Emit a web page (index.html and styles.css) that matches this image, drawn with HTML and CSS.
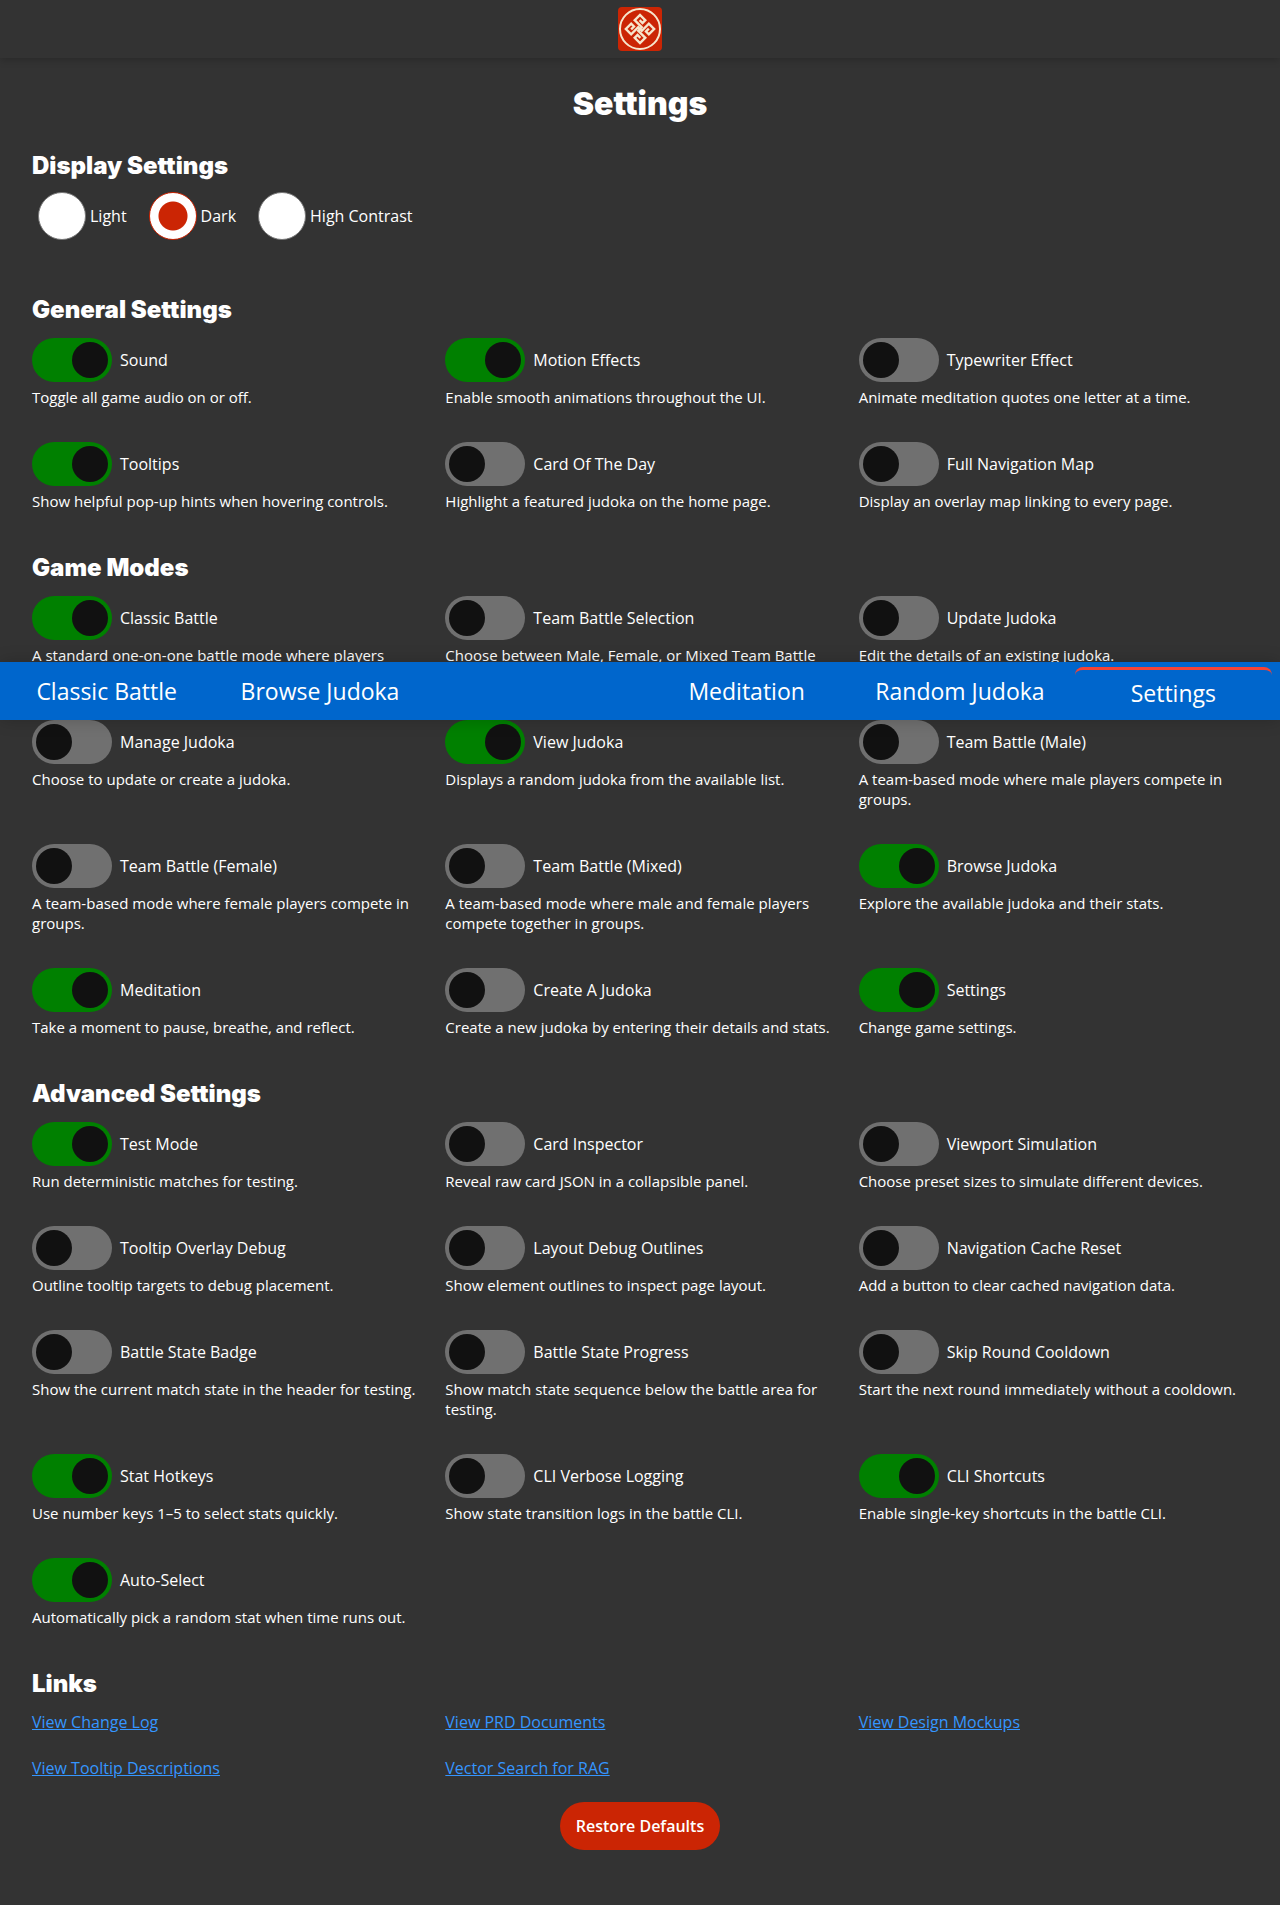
FILE: index.html
```html
<!DOCTYPE html>
<html lang="en">
<head>
<meta charset="utf-8">
<meta name="viewport" content="width=device-width, initial-scale=1">
<title>Settings</title>
<link rel="stylesheet" href="styles.css">
</head>
<body>
<header class="header">
  <a class="logo" href="#" aria-label="Home">
    <svg viewBox="0 0 44 44" width="44" height="44" aria-hidden="true">
      <rect width="44" height="44" rx="4" fill="#cb2504"/>
      <g fill="none" stroke="#f6e6cc" stroke-width="2.4">
        <circle cx="22" cy="22" r="20" stroke-width="2"/>
        <g transform="translate(22 22) rotate(45)">
          <path id="arm" d="M0 0V-2.5H-10V-10H-2.5V-6H-6.5"/>
          <use href="#arm" transform="rotate(90)"/>
          <use href="#arm" transform="rotate(180)"/>
          <use href="#arm" transform="rotate(270)"/>
        </g>
      </g>
    </svg>
  </a>
</header>

<main class="page">
  <h1 class="title">Settings</h1>

  <section class="section">
    <h2 class="heading">Display Settings</h2>
    <div class="themes" role="radiogroup" aria-label="Theme">
      <label class="theme"><input class="radio" type="radio" name="theme">Light</label>
      <label class="theme"><input class="radio" type="radio" name="theme" checked>Dark</label>
      <label class="theme"><input class="radio" type="radio" name="theme">High Contrast</label>
    </div>
  </section>

  <section class="section">
    <h2 class="heading">General Settings</h2>
    <div class="grid">
      <div class="item"><label class="toggle"><input class="switch" type="checkbox" checked>Sound</label><p class="desc">Toggle all game audio on or off.</p></div>
      <div class="item"><label class="toggle"><input class="switch" type="checkbox" checked>Motion Effects</label><p class="desc">Enable smooth animations throughout the UI.</p></div>
      <div class="item"><label class="toggle"><input class="switch" type="checkbox">Typewriter Effect</label><p class="desc">Animate meditation quotes one letter at a time.</p></div>
      <div class="item"><label class="toggle"><input class="switch" type="checkbox" checked>Tooltips</label><p class="desc">Show helpful pop-up hints when hovering controls.</p></div>
      <div class="item"><label class="toggle"><input class="switch" type="checkbox">Card Of The Day</label><p class="desc">Highlight a featured judoka on the home page.</p></div>
      <div class="item"><label class="toggle"><input class="switch" type="checkbox">Full Navigation Map</label><p class="desc">Display an overlay map linking to every page.</p></div>
    </div>
  </section>

  <section class="section">
    <h2 class="heading">Game Modes</h2>
    <div class="grid">
      <div class="item"><label class="toggle"><input class="switch" type="checkbox" checked>Classic Battle</label><p class="desc">A standard one-on-one battle mode where players compete.</p></div>
      <div class="item"><label class="toggle"><input class="switch" type="checkbox">Team Battle Selection</label><p class="desc">Choose between Male, Female, or Mixed Team Battle modes.</p></div>
      <div class="item"><label class="toggle"><input class="switch" type="checkbox">Update Judoka</label><p class="desc">Edit the details of an existing judoka.</p></div>
      <div class="item"><label class="toggle"><input class="switch" type="checkbox">Manage Judoka</label><p class="desc">Choose to update or create a judoka.</p></div>
      <div class="item"><label class="toggle"><input class="switch" type="checkbox" checked>View Judoka</label><p class="desc">Displays a random judoka from the available list.</p></div>
      <div class="item"><label class="toggle"><input class="switch" type="checkbox">Team Battle (Male)</label><p class="desc">A team-based mode where male players compete in groups.</p></div>
      <div class="item"><label class="toggle"><input class="switch" type="checkbox">Team Battle (Female)</label><p class="desc">A team-based mode where female players compete in groups.</p></div>
      <div class="item"><label class="toggle"><input class="switch" type="checkbox">Team Battle (Mixed)</label><p class="desc">A team-based mode where male and female players compete together in groups.</p></div>
      <div class="item"><label class="toggle"><input class="switch" type="checkbox" checked>Browse Judoka</label><p class="desc">Explore the available judoka and their stats.</p></div>
      <div class="item"><label class="toggle"><input class="switch" type="checkbox" checked>Meditation</label><p class="desc">Take a moment to pause, breathe, and reflect.</p></div>
      <div class="item"><label class="toggle"><input class="switch" type="checkbox">Create A Judoka</label><p class="desc">Create a new judoka by entering their details and stats.</p></div>
      <div class="item"><label class="toggle"><input class="switch" type="checkbox" checked>Settings</label><p class="desc">Change game settings.</p></div>
    </div>
  </section>

  <section class="section">
    <h2 class="heading">Advanced Settings</h2>
    <div class="grid">
      <div class="item"><label class="toggle"><input class="switch" type="checkbox" checked>Test Mode</label><p class="desc">Run deterministic matches for testing.</p></div>
      <div class="item"><label class="toggle"><input class="switch" type="checkbox">Card Inspector</label><p class="desc">Reveal raw card JSON in a collapsible panel.</p></div>
      <div class="item"><label class="toggle"><input class="switch" type="checkbox">Viewport Simulation</label><p class="desc">Choose preset sizes to simulate different devices.</p></div>
      <div class="item"><label class="toggle"><input class="switch" type="checkbox">Tooltip Overlay Debug</label><p class="desc">Outline tooltip targets to debug placement.</p></div>
      <div class="item"><label class="toggle"><input class="switch" type="checkbox">Layout Debug Outlines</label><p class="desc">Show element outlines to inspect page layout.</p></div>
      <div class="item"><label class="toggle"><input class="switch" type="checkbox">Navigation Cache Reset</label><p class="desc">Add a button to clear cached navigation data.</p></div>
      <div class="item"><label class="toggle"><input class="switch" type="checkbox">Battle State Badge</label><p class="desc">Show the current match state in the header for testing.</p></div>
      <div class="item"><label class="toggle"><input class="switch" type="checkbox">Battle State Progress</label><p class="desc">Show match state sequence below the battle area for testing.</p></div>
      <div class="item"><label class="toggle"><input class="switch" type="checkbox">Skip Round Cooldown</label><p class="desc">Start the next round immediately without a cooldown.</p></div>
      <div class="item"><label class="toggle"><input class="switch" type="checkbox" checked>Stat Hotkeys</label><p class="desc">Use number keys 1–5 to select stats quickly.</p></div>
      <div class="item"><label class="toggle"><input class="switch" type="checkbox">CLI Verbose Logging</label><p class="desc">Show state transition logs in the battle CLI.</p></div>
      <div class="item"><label class="toggle"><input class="switch" type="checkbox" checked>CLI Shortcuts</label><p class="desc">Enable single-key shortcuts in the battle CLI.</p></div>
      <div class="item"><label class="toggle"><input class="switch" type="checkbox" checked>Auto-Select</label><p class="desc">Automatically pick a random stat when time runs out.</p></div>
    </div>
  </section>

  <section class="section">
    <h2 class="heading">Links</h2>
    <div class="links">
      <a class="link" href="#">View Change Log</a>
      <a class="link" href="#">View PRD Documents</a>
      <a class="link" href="#">View Design Mockups</a>
      <a class="link" href="#">View Tooltip Descriptions</a>
      <a class="link" href="#">Vector Search for RAG</a>
    </div>
  </section>

  <div class="actions"><button class="button" type="button">Restore Defaults</button></div>
</main>

<nav class="navbar" aria-label="Main">
  <ul class="nav-list">
    <li class="nav-item"><a class="nav-link" href="#">Classic Battle</a></li>
    <li class="nav-item"><a class="nav-link" href="#">Browse Judoka</a></li>
    <li class="nav-item"></li>
    <li class="nav-item"><a class="nav-link" href="#">Meditation</a></li>
    <li class="nav-item"><a class="nav-link" href="#">Random Judoka</a></li>
    <li class="nav-item"><a class="nav-link nav-link-active" href="#" aria-current="page">Settings</a></li>
  </ul>
</nav>
</body>
</html>
```
FILE: styles.css
```css
* { box-sizing: border-box; }

body {
  position: relative;
  margin: 0;
  background: #333;
  color: #fff;
  font: 16px/24px "Open Sans", sans-serif;
}

.header {
  display: flex;
  justify-content: center;
  padding: 7px 0;
  box-shadow: 0 2px 8px rgba(0, 0, 0, 0.2);
}

.logo, .logo svg { display: block; }

.page { padding: 26px 32px 54px; }

.title, .heading {
  margin: 0;
  font-family: Inter, sans-serif;
  font-weight: 900;
}

.title {
  margin-bottom: 26px;
  font-size: 32px;
  line-height: 40px;
  text-align: center;
}

.heading {
  margin-bottom: 8px;
  font-size: 24px;
  line-height: 32px;
}

.themes {
  display: flex;
  gap: 22px;
  padding: 2px 6px 54px;
}

.theme {
  display: flex;
  align-items: center;
  gap: 4px;
}

.radio {
  appearance: none;
  width: 48px;
  height: 48px;
  margin: 0;
  border: 1px solid #767676;
  border-radius: 50%;
  background: #fff;
}

.radio:checked {
  border-color: #cb2504;
  background: radial-gradient(circle, #cb2504 14px, #fff 15px);
}

.grid, .links {
  display: grid;
  grid-template-columns: repeat(3, 1fr);
  column-gap: 24px;
}

.grid { padding: 4px 0 6px; }

.item { padding-bottom: 35px; }

.toggle {
  display: flex;
  align-items: center;
  gap: 8px;
}

.switch {
  appearance: none;
  flex: none;
  width: 80px;
  height: 44px;
  margin: 0;
  padding: 4px;
  border-radius: 22px;
  background: #707070;
}

.switch::before {
  content: "";
  display: block;
  width: 36px;
  height: 36px;
  border-radius: 50%;
  background: #111;
}

.switch:checked { background: #008000; }
.switch:checked::before { margin-left: auto; }

.desc {
  margin: 5px 0 0;
  font-size: 15px;
  line-height: 20px;
}

.links {
  row-gap: 22px;
  padding-top: 2px;
}

.link {
  justify-self: start;
  color: #3596ff;
}

.actions {
  display: flex;
  justify-content: center;
  margin-top: 22px;
}

.button {
  height: 48px;
  padding: 0 16px;
  border: 0;
  border-radius: 24px;
  background: #cb2504;
  color: #fff;
  font: 600 16px/24px "Open Sans", sans-serif;
}

.navbar {
  position: absolute;
  top: 662px;
  left: 0;
  right: 0;
  background: #06c;
  box-shadow: 0 0 16px rgba(0, 0, 0, 0.2);
}

.nav-list {
  display: flex;
  height: 58px;
  margin: 0;
  padding: 0;
  list-style: none;
}

.nav-item {
  flex: 1;
  padding: 5px 8px;
}

.nav-link {
  display: block;
  border-radius: 8px;
  color: #fff;
  font-size: 23px;
  line-height: 48px;
  text-align: center;
  text-decoration: none;
}

.nav-link-active {
  border-top: 3px solid #f44336;
  line-height: 46px;
}
```
